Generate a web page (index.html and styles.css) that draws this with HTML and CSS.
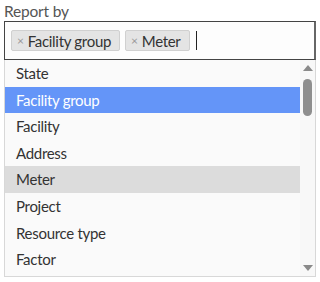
FILE: index.html
```html
<!DOCTYPE html>
<html>
<head>
<meta charset="utf-8">
<link rel="stylesheet" href="styles.css">
</head>
<body>
<div class="field">
  <div class="label">Report by</div>
  <div class="select">
    <span class="chip"><span class="x">×</span>Facility group</span>
    <span class="chip"><span class="x">×</span>Meter</span>
    <span class="caret"></span>
  </div>
  <div class="menu">
    <ul class="options">
      <li>State</li>
      <li class="active">Facility group</li>
      <li>Facility</li>
      <li>Address</li>
      <li class="hover">Meter</li>
      <li>Project</li>
      <li>Resource type</li>
      <li>Factor</li>
    </ul>
    <div class="scrollbar">
      <span class="arrow up"></span>
      <div class="track"><span class="thumb"></span></div>
      <span class="arrow down"></span>
    </div>
  </div>
</div>
</body>
</html>
```

FILE: styles.css
```css
html, body {
  margin: 0;
  padding: 0;
  background: #ffffff;
}
body {
  font-family: "Lato", "Open Sans", sans-serif;
  color: #333333;
  font-size: 15px;
  letter-spacing: -0.3px;
}
.field {
  padding: 2px 4px 0 4px;
  width: 312px;
}
.label {
  color: #555555;
  font-size: 15.5px;
  line-height: 19px;
  height: 19px;
  letter-spacing: -0.2px;
}
.select {
  box-sizing: border-box;
  height: 39px;
  border: 1px solid #444444;
  border-right: 2px solid #666666;
  display: flex;
  align-items: center;
  gap: 5px;
  padding: 0 0 0 6px;
  background: #fdfdfd;
}
.chip {
  display: inline-flex;
  align-items: center;
  height: 21px;
  box-sizing: border-box;
  background: #e4e4e4;
  border: 1px solid #d0d0d0;
  border-radius: 2px;
  padding: 0 8px 0 5px;
  color: #333;
}
.x {
  color: #999;
  font-size: 12px;
  margin-right: 4px;
}
.caret {
  width: 1px;
  height: 19px;
  background: #222;
  margin-left: 1px;
}
.menu {
  display: flex;
  box-sizing: border-box;
  height: 217px;
  border: 1px solid #d8d8d8;
  border-top: none;
  background: #fafafa;
  overflow: hidden;
}
.options {
  list-style: none;
  margin: 0;
  padding: 0;
  flex: 1;
}
.options li {
  height: 26.6px;
  line-height: 27px;
  padding-left: 11px;
  white-space: nowrap;
  color: #333;
}
.options li.active {
  background: #6495f8;
  color: #ffffff;
}
.options li.hover {
  background: #dcdcdc;
}
.scrollbar {
  width: 15px;
  display: flex;
  flex-direction: column;
  align-items: center;
  background: #f8f8f8;
}
.arrow {
  width: 0;
  height: 0;
  border-left: 5px solid transparent;
  border-right: 5px solid transparent;
}
.arrow.up {
  margin-top: 5px;
  border-bottom: 6px solid #8a8a8a;
}
.arrow.down {
  margin-bottom: 5px;
  border-top: 6px solid #8a8a8a;
}
.track {
  flex: 1;
  width: 100%;
  display: flex;
  justify-content: center;
  padding-top: 8px;
}
.thumb {
  width: 9px;
  height: 37px;
  border-radius: 5px;
  background: #8f8f8f;
}
```
